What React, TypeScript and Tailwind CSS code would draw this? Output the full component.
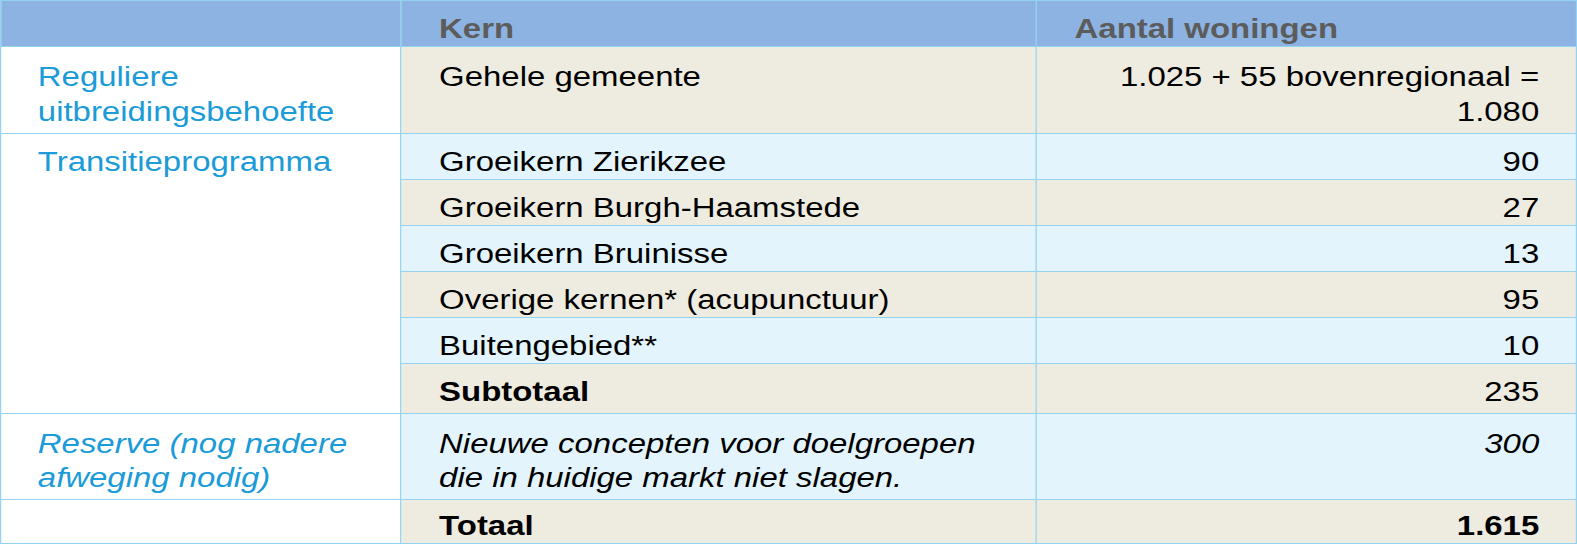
import React from "react";

const BEIGE = "bg-[#EEECE1]";
const BLUE = "bg-[#E3F4FC]";

const transitie = [
  { kern: "Groeikern Zierikzee", aantal: "90", bg: BLUE },
  { kern: "Groeikern Burgh-Haamstede", aantal: "27", bg: BEIGE },
  { kern: "Groeikern Bruinisse", aantal: "13", bg: BLUE },
  { kern: "Overige kernen* (acupunctuur)", aantal: "95", bg: BEIGE },
  { kern: "Buitengebied**", aantal: "10", bg: BLUE },
];

const cell = "border border-[#93D2F0] align-top pt-[11px] pl-[31px] pr-[30px] text-left";
const numCell = "border border-[#93D2F0] align-top pt-[11px] pl-[10px] pr-[30px] text-right";
const labelCell = "border border-[#93D2F0] align-top pt-[11px] pl-[30px] pr-[30px] text-left bg-white text-[#1B9BD7]";

export default function App() {
  return (
    <div className="w-[1577px] h-[545px] overflow-hidden bg-white font-['Liberation_Sans',Arial,sans-serif] text-[27px] leading-[34px] text-black">
      <table className="w-[1293px] origin-top-left scale-x-[1.2197] table-fixed border-collapse border border-[#93D2F0]">
        <colgroup>
          <col className="w-[328px]" />
          <col className="w-[521px]" />
          <col />
        </colgroup>
        <thead>
          <tr className="h-[46px] bg-[#8DB3E2] text-[#5C5C5C] font-bold">
            <th className={cell}></th>
            <th className={cell}>Kern</th>
            <th className={cell}>Aantal woningen</th>
          </tr>
        </thead>
        <tbody>
          {/* reguliere behoefte */}
          <tr className="h-[87px] [&>td]:pt-[13px] leading-[35px]">
            <td className={labelCell}>Reguliere uitbreidingsbehoefte</td>
            <td className={`${cell} ${BEIGE}`}>Gehele gemeente</td>
            <td className={`${numCell} ${BEIGE}`}>1.025 + 55 bovenregionaal = 1.080</td>
          </tr>

          {/* transitieprogramma */}
          {transitie.map((r, i) => (
            <tr key={r.kern} className="h-[46px]">
              {i === 0 && (
                <td rowSpan={6} className={labelCell}>
                  Transitieprogramma
                </td>
              )}
              <td className={`${cell} ${r.bg}`}>{r.kern}</td>
              <td className={`${numCell} ${r.bg}`}>{r.aantal}</td>
            </tr>
          ))}
          <tr className="h-[50px]">
            <td className={`${cell} ${BEIGE} font-bold`}>Subtotaal</td>
            <td className={`${numCell} ${BEIGE}`}>235</td>
          </tr>

          {/* reserve */}
          <tr className="h-[86px] italic [&>td]:pt-[13px]">
            <td className={labelCell}>Reserve (nog nadere afweging nodig)</td>
            <td className={`${cell} ${BLUE}`}>Nieuwe concepten voor doelgroepen die in huidige markt niet slagen.</td>
            <td className={`${numCell} ${BLUE}`}>300</td>
          </tr>

          <tr className="h-[44px] font-bold [&>td]:pt-[9px]">
            <td className={labelCell}></td>
            <td className={`${cell} ${BEIGE}`}>Totaal</td>
            <td className={`${numCell} ${BEIGE}`}>1.615</td>
          </tr>
        </tbody>
      </table>
    </div>
  );
}
